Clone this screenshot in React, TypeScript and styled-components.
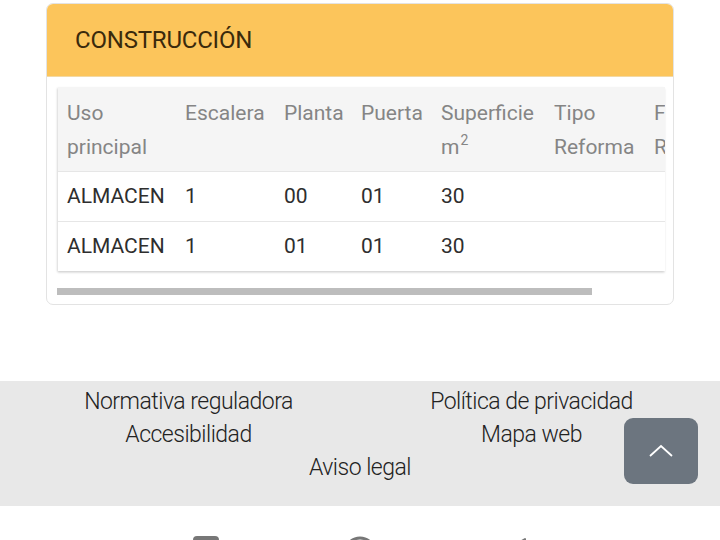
import React from "react";
import styled, { createGlobalStyle } from "styled-components";

const Global = createGlobalStyle`
  html, body { margin: 0; padding: 0; background: #ffffff; }
  body { font-family: Roboto, "Noto Sans", Arial, sans-serif; width: 720px; height: 540px; overflow: hidden; }
  * { box-sizing: border-box; }
`;

const Page = styled.div`
  position: relative;
  width: 720px;
  height: 540px;
  display: flex;
  flex-direction: column;
  padding-top: 3px;
`;

const Card = styled.section`
  margin-left: 46px;
  width: 628px;
  border: 1px solid #e3e3e3;
  border-radius: 7px;
  overflow: hidden;
  background: #fff;
`;

const CardHeader = styled.header`
  height: 73px;
  background: #fcc55b;
  display: flex;
  align-items: center;
  padding-left: 28px;
  border-bottom: 1px solid #f3d9a3;
`;

const Title = styled.h2`
  margin: 0;
  font-size: 24px;
  font-weight: 400;
  color: #3a2a0c;
  letter-spacing: -0.2px;
`;

const CardBody = styled.div`
  padding: 10px 7px 9px 11px;
`;

const TableWrap = styled.div`
  width: 607px;
  overflow: hidden;
  box-shadow: -1px 1px 2px rgba(0,0,0,0.12), 0 2px 2px rgba(0,0,0,0.08);
`;

const Table = styled.table`
  border-collapse: collapse;
  table-layout: fixed;
  width: 697px;
  font-size: 21px;
  line-height: 33px;
`;

const Th = styled.th<{ $w: number }>`
  width: ${(p) => p.$w}px;
  text-align: left;
  vertical-align: top;
  font-weight: 400;
  color: #858585;
  background: #f5f5f5;
  padding: 9px 0 7px 9px;
  line-height: 34px;
  white-space: normal;
`;

const Td = styled.td`
  color: #2e2e2e;
  padding: 8px 0 8px 9px;
  border-top: 1px solid #e6e6e6;
  white-space: nowrap;
`;

const Sup = styled.sup`
  display: inline-block;
  margin-left: 1px;
  font-size: 14px;
  line-height: 14px;
  vertical-align: 9px;
`;

const ScrollTrack = styled.div`
  margin-top: 17px;
  margin-left: -1px;
  height: 7px;
  width: 535px;
  background: #bdbdbd;
`;

const Footer = styled.footer`
  margin-top: 76px;
  background: #e8e8e8;
  height: 125px;
  padding: 4px 17px 0;
  display: grid;
  grid-template-columns: 1fr 1fr;
  align-content: start;
  font-size: 23px;
  font-weight: 300;
  line-height: 33px;
  color: #222;
`;

const FooterLink = styled.a<{ $span?: boolean }>`
  text-align: center;
  color: inherit;
  text-decoration: none;
  grid-column: ${(p) => (p.$span ? "1 / span 2" : "auto")};
  letter-spacing: -0.5px;
`;

const TopButton = styled.button`
  position: absolute;
  left: 624px;
  top: 418px;
  width: 74px;
  height: 66px;
  border: none;
  border-radius: 9px;
  background: #6c757f;
  display: flex;
  align-items: center;
  justify-content: center;
  padding: 0;
`;

const NavBar = styled.nav`
  flex: 1;
  background: #fff;
  display: flex;
  justify-content: center;
  gap: 118px;
  padding-top: 27px;
  overflow: hidden;
`;

const NavIcon = styled.svg`
  width: 36px;
  height: 36px;
  flex: none;
`;

const headers: { w: number; label: React.ReactNode }[] = [
  { w: 118, label: "Uso principal" },
  { w: 99, label: "Escalera" },
  { w: 77, label: "Planta" },
  { w: 80, label: "Puerta" },
  { w: 113, label: (<>Superficie m<Sup>2</Sup></>) },
  { w: 100, label: "Tipo Reforma" },
  { w: 110, label: "Fecha Reforma" },
];

const rows = [
  ["ALMACEN", "1", "00", "01", "30", "", ""],
  ["ALMACEN", "1", "01", "01", "30", "", ""],
];

export default function App() {
  return (
    <>
      <Global />
      <Page>
        <Card>
          <CardHeader>
            <Title>CONSTRUCCIÓN</Title>
          </CardHeader>
          <CardBody>
            <TableWrap>
              <Table>
                <thead>
                  <tr>
                    {headers.map((h, i) => (
                      <Th key={i} $w={h.w}>{h.label}</Th>
                    ))}
                  </tr>
                </thead>
                <tbody>
                  {rows.map((r, i) => (
                    <tr key={i}>
                      {r.map((c, j) => (
                        <Td key={j}>{c}</Td>
                      ))}
                    </tr>
                  ))}
                </tbody>
              </Table>
            </TableWrap>
            <ScrollTrack />
          </CardBody>
        </Card>
        <Footer>
          <FooterLink href="#">Normativa reguladora</FooterLink>
          <FooterLink href="#">Política de privacidad</FooterLink>
          <FooterLink href="#">Accesibilidad</FooterLink>
          <FooterLink href="#">Mapa web</FooterLink>
          <FooterLink href="#" $span>Aviso legal</FooterLink>
        </Footer>
        <NavBar>
          <NavIcon viewBox="0 0 36 36">
            <rect x="5" y="3" width="26" height="26" rx="4" fill="#777" />
          </NavIcon>
          <NavIcon viewBox="0 0 36 36">
            <circle cx="18" cy="20" r="15" fill="none" stroke="#777" strokeWidth="3" />
          </NavIcon>
          <NavIcon viewBox="0 0 36 36">
            <path d="M29 6 L29 34 L6 20 Z" fill="#777" strokeLinejoin="round" stroke="#777" strokeWidth="2" />
          </NavIcon>
        </NavBar>
        <TopButton aria-label="Volver arriba">
          <svg width="26" height="16" viewBox="0 0 26 16">
            <path d="M2 13 L13 3 L24 13" fill="none" stroke="#fff" strokeWidth="1.8" />
          </svg>
        </TopButton>
      </Page>
    </>
  );
}
